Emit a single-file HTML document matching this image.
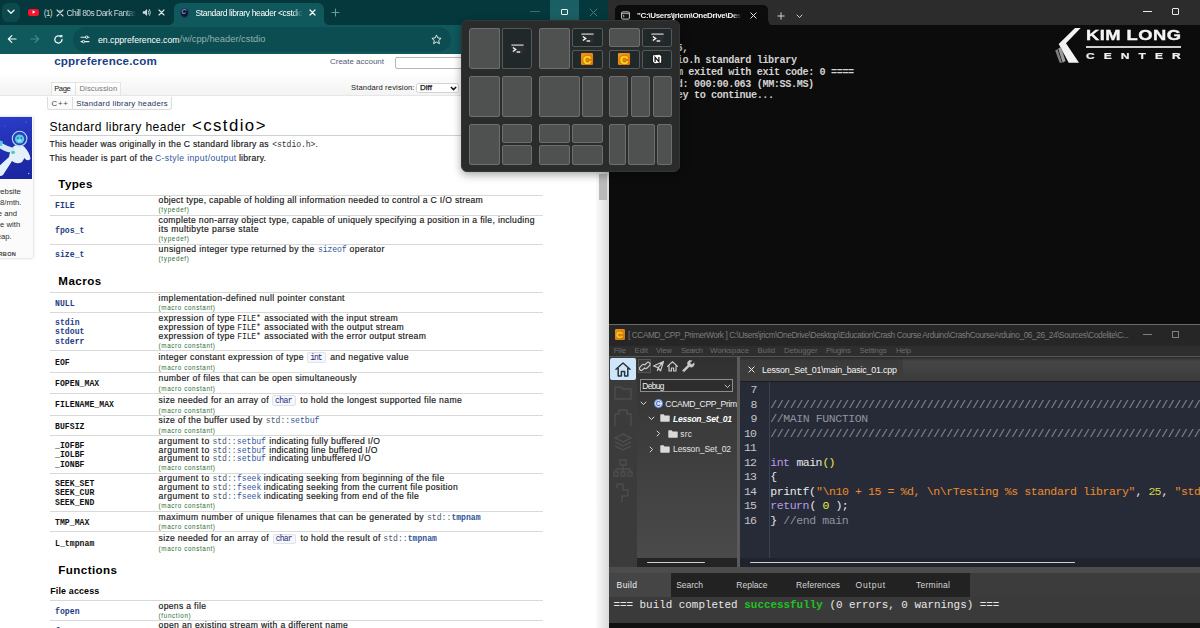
<!DOCTYPE html>
<html>
<head>
<meta charset="utf-8">
<title>Desktop</title>
<style>
*{box-sizing:border-box;margin:0;padding:0}
html,body{width:1200px;height:628px;overflow:hidden;background:#0c0c0c;font-family:"Liberation Sans",sans-serif;}
.abs{position:absolute}
#stage{position:absolute;left:0;top:0;width:1200px;height:628px;overflow:hidden;font-size:9px;line-height:1}
.t{position:absolute;white-space:nowrap;line-height:1}
#browser{left:0;top:0;width:609px;height:628px;background:#fff;overflow:hidden}
#tabbar{left:0;top:0;width:609px;height:25px;background:#04383c}
#toolbar{left:0;top:25px;width:609px;height:28px;background:#0f585c}
#page{left:0;top:53px;width:609px;height:575px;background:#fff;overflow:hidden}
#term{left:608px;top:0;width:592px;height:325px;background:#0c0c0c;overflow:hidden}
#termbar{left:0;top:0;width:592px;height:25px;background:#2c2c2c}
</style>
</head>
<body>
<div id="stage">
<!-- BROWSER -->
<div id="browser" class="abs">
<div id="tabbar" class="abs">
<div class="abs" style="left:2.00px;top:2.50px;width:17.50px;height:19.00px;background:#0d4a4e;border-radius:6px;"></div>
<svg class="abs" style="left:7px;top:9px" width="8" height="6" viewBox="0 0 8 6"><path d="M1 1.2 L4 4.2 L7 1.2" fill="none" stroke="#e8f2f2" stroke-width="1.4" stroke-linecap="round" stroke-linejoin="round"/></svg>
<div class="abs" style="left:28.00px;top:8.60px;width:11.00px;height:7.20px;background:#f5132d;border-radius:2.2px;"></div>
<svg class="abs" style="left:31.6px;top:10.2px" width="4" height="4" viewBox="0 0 4 4"><path d="M0.6 0.3 L3.4 2 L0.6 3.7Z" fill="#fff"/></svg>
<div class="t" style="left:43.80px;top:8.64px;font-size:8.50px;color:#c9d9da;letter-spacing:-0.844px;">(1)</div>
<svg class="abs" style="left:55.5px;top:8.5px" width="8" height="8" viewBox="0 0 8 8"><path d="M1 1 L7 7 M7 1 L1 7" stroke="#c9d9da" stroke-width="1.1" stroke-linecap="round"/><path d="M3 1.2 L4 2.6 L5 1.2" stroke="#c9d9da" stroke-width=".8" fill="none"/></svg>
<div class="t" style="left:66.50px;top:8.64px;font-size:8.50px;color:#c9d9da;letter-spacing:-0.538px;-webkit-mask-image:linear-gradient(90deg,#000 85%,transparent);">Chill 80s Dark Fantas</div>
<svg class="abs" style="left:141.5px;top:8px" width="10" height="9" viewBox="0 0 10 9"><path d="M0.8 3.2 H2.6 L5 1 V8 L2.6 5.8 H0.8Z" fill="#c9d9da"/><path d="M6.3 2.8 Q7.4 4.5 6.3 6.2 M7.6 1.6 Q9.4 4.5 7.6 7.4" stroke="#c9d9da" stroke-width=".9" fill="none" stroke-linecap="round"/></svg>
<svg class="abs" style="left:157.5px;top:9px" width="7" height="7" viewBox="0 0 7 7"><path d="M1 1 L6 6 M6 1 L1 6" stroke="#dfeaea" stroke-width="1.1" stroke-linecap="round"/></svg>
<div class="abs" style="left:173.50px;top:3.00px;width:150.50px;height:23.00px;background:#0f585c;border-radius:6px 6px 0 0;"></div>
<div class="abs" style="left:168.5px;top:20px;width:5px;height:5px;background:radial-gradient(circle at 0 0,transparent 4.6px,#0f585c 5.2px)"></div>
<div class="abs" style="left:324px;top:20px;width:5px;height:5px;background:radial-gradient(circle at 100% 0,transparent 4.6px,#0f585c 5.2px)"></div>
<div class="abs" style="left:179.5px;top:8px;width:9.5px;height:9.5px;border-radius:50%;background:#0b1a33;border:0.8px solid #27406b"></div>
<div class="t" style="left:181.60px;top:9.17px;font-size:6.30px;color:#7f96c4;font-weight:700;font-style:italic;">C</div>
<div class="t" style="left:195.50px;top:8.64px;font-size:8.50px;color:#ffffff;letter-spacing:-0.362px;-webkit-mask-image:linear-gradient(90deg,#000 90%,transparent);">Standard library header &lt;cstdio</div>
<svg class="abs" style="left:309px;top:9px" width="7" height="7" viewBox="0 0 7 7"><path d="M1 1 L6 6 M6 1 L1 6" stroke="#fff" stroke-width="1.2" stroke-linecap="round"/></svg>
<svg class="abs" style="left:331px;top:8px" width="9" height="9" viewBox="0 0 9 9"><path d="M4.5 1 V8 M1 4.5 H8" stroke="#6a9c9e" stroke-width="1.1" stroke-linecap="round"/></svg>
<div class="abs" style="left:529.50px;top:11.40px;width:10.00px;height:1.00px;background:#2f7174;"></div>
<div class="abs" style="left:550.00px;top:0.00px;width:29.00px;height:20.50px;background:#1a5f63;"></div>
<div class="abs" style="left:561px;top:8.5px;width:6.6px;height:6.6px;border:1px solid #f0f6f6;border-radius:1px"></div>
<svg class="abs" style="left:589px;top:8px" width="9" height="9" viewBox="0 0 9 9"><path d="M1 1 L8 8 M8 1 L1 8" stroke="#3f8285" stroke-width="1" stroke-linecap="round"/></svg>
</div>
<div id="toolbar" class="abs">
<svg class="abs" style="left:7px;top:9px" width="10" height="10" viewBox="0 0 10 10"><path d="M9 5 H1.5 M4.8 1.6 L1.4 5 L4.8 8.4" fill="none" stroke="#f2f8f8" stroke-width="1.2" stroke-linecap="round" stroke-linejoin="round"/></svg>
<svg class="abs" style="left:30px;top:9px" width="10" height="10" viewBox="0 0 10 10"><path d="M1 5 H8.5 M5.2 1.6 L8.6 5 L5.2 8.4" fill="none" stroke="#3f8a8d" stroke-width="1.2" stroke-linecap="round" stroke-linejoin="round"/></svg>
<svg class="abs" style="left:53px;top:8.5px" width="11" height="11" viewBox="0 0 11 11"><path d="M9 5.5 A3.6 3.6 0 1 1 7.9 2.9" fill="none" stroke="#f2f8f8" stroke-width="1.3" stroke-linecap="round"/><path d="M6.6 0.9 H9.4 V3.7Z" fill="#f2f8f8"/></svg>
<div class="abs" style="left:72.50px;top:1.50px;width:378.00px;height:25.00px;background:#0c4d51;border-radius:12.5px;"></div>
<svg class="abs" style="left:80px;top:9.5px" width="10" height="9" viewBox="0 0 10 9"><path d="M1 2.2 H5.2 M7.6 2.2 H9 M1 6.6 H2.4 M4.8 6.6 H9" stroke="#e6f0f0" stroke-width="1.1" stroke-linecap="round"/><circle cx="6.6" cy="2.2" r="1.2" fill="none" stroke="#e6f0f0" stroke-width="1"/><circle cx="3.4" cy="6.6" r="1.2" fill="none" stroke="#e6f0f0" stroke-width="1"/></svg>
<div class="t" style="left:98.00px;top:10.54px;font-size:8.69px;color:#ffffff;letter-spacing:0.000px;">en.cppreference.com</div>
<div class="t" style="left:179.80px;top:10.16px;font-size:9.35px;color:#8fb0b2;letter-spacing:-0.000px;">/w/cpp/header/cstdio</div>
<svg class="abs" style="left:431px;top:8.5px" width="11" height="11" viewBox="0 0 11 11"><path d="M5.5 1 L6.9 4 L10.1 4.3 L7.7 6.5 L8.4 9.7 L5.5 8 L2.6 9.7 L3.3 6.5 L0.9 4.3 L4.1 4Z" fill="none" stroke="#dbe8e8" stroke-width="1" stroke-linejoin="round"/></svg>
</div>
<div id="page" class="abs">
<div class="abs" style="left:0;top:0.7px;width:600px;height:41.5px;background:linear-gradient(#fff 45%,#f3f3f3)"></div>
<div class="abs" style="left:0.00px;top:0.00px;width:609.00px;height:0.70px;background:#0f585c;"></div>
<div class="t" style="left:54.20px;top:2.10px;font-size:11.60px;color:#1c3f88;font-weight:700;letter-spacing:0.178px;">cppreference.com</div>
<div class="t" style="left:330.00px;top:4.72px;font-size:8.00px;color:#545c78;letter-spacing:-0.020px;">Create account</div>
<div class="abs" style="left:395px;top:3.5px;width:70px;height:12px;border:1px solid #b5b5b5;border-radius:2px;background:#fff"></div>
<div class="abs" style="left:50.5px;top:28.5px;width:70px;height:14px;border:1px solid #e4e4e4;border-bottom:none;background:linear-gradient(#fff,#f6f6f6)"></div>
<div class="abs" style="left:74.50px;top:29.00px;width:1.00px;height:13.00px;background:#e0e0e0;"></div>
<div class="t" style="left:54.20px;top:31.84px;font-size:7.60px;color:#222;letter-spacing:-0.417px;">Page</div>
<div class="t" style="left:79.50px;top:31.84px;font-size:7.60px;color:#777;letter-spacing:0.106px;">Discussion</div>
<div class="abs" style="left:0.00px;top:42.00px;width:596.00px;height:1.00px;background:#e6e6e6;"></div>
<div class="t" style="left:351.00px;top:30.94px;font-size:7.60px;color:#222;letter-spacing:0.132px;">Standard revision:</div>
<div class="abs" style="left:416px;top:29.7px;width:43.2px;height:10.2px;border:1px solid #d2d2d2;border-radius:2.5px;background:#fff"></div>
<div class="t" style="left:420.00px;top:30.72px;font-size:8.00px;color:#111;-webkit-text-stroke:.25px #111;">Diff</div>
<svg class="abs" style="left:449.6px;top:32.6px" width="7" height="5" viewBox="0 0 7 5"><path d="M.9 .9 L3.5 3.6 L6.1 .9" fill="none" stroke="#111" stroke-width="1.5"/></svg>
<div class="abs" style="left:46.5px;top:44.0px;width:125px;height:12.5px;border:1px solid #dcdcdc;border-top:none;border-radius:0 0 3px 3px;background:#fbfbfb"></div>
<div class="abs" style="left:72.30px;top:44.00px;width:1.00px;height:12.00px;background:#dcdcdc;"></div>
<div class="t" style="left:51.50px;top:46.83px;font-size:7.80px;color:#444;letter-spacing:0.778px;">C++</div>
<div class="t" style="left:76.20px;top:46.83px;font-size:7.80px;color:#2a3560;letter-spacing:0.269px;">Standard library headers</div>
<div class="abs" style="left:-6px;top:63.5px;width:39.3px;height:141.5px;background:#fbfbfb;box-shadow:0 0 3px rgba(0,0,0,.22)"></div>
<div class="abs" style="left:0;top:63.5px;width:32.4px;height:62.8px;background:linear-gradient(170deg,#2a3cc8,#1f2db0 55%,#1b279e);overflow:hidden"><svg width="33" height="63" viewBox="0 0 33 63"><circle cx="28.7" cy="56.5" r=".7" fill="#b9c6ff"/><circle cx="26" cy="5" r=".5" fill="#8fa0ff"/><circle cx="5" cy="9" r=".4" fill="#8fa0ff"/><path d="M14 29 Q19 26.5 24 29.5 Q30 36 30.5 42 Q27 45 24.5 41 L22 45 Q17 48 12 44 L3 58 Q0 60 -2 58 L-2 50 L9 40 Q10 33 14 29Z" fill="#e4f1fa"/><path d="M15 31 Q8 30 0 25 L-1 31 Q7 36 13 36Z" fill="#d3e9f6"/><path d="M-1 23 L3 24.5 L2 29 L-1 29Z" fill="#59c9d8"/><path d="M11 34.5 l3.4 -.8 l.9 2.6 l-3.4 .9Z" fill="#4fc6b4"/><circle cx="19.6" cy="21.6" r="7.3" fill="#2b3dc0" stroke="#a9def0" stroke-width="1.1"/><circle cx="19.6" cy="22" r="4.6" fill="#58cde0"/><circle cx="17.9" cy="21" r=".8" fill="#2638b0"/><circle cx="21.3" cy="21" r=".8" fill="#2638b0"/><ellipse cx="19.6" cy="23.8" rx="2" ry="1.3" fill="#9ce4ee"/></svg></div>
<div class="t" style="left:-5.21px;top:134.89px;font-size:7.70px;color:#2e2e2e;">website</div>
<div class="t" style="left:0.10px;top:145.89px;font-size:7.70px;color:#2e2e2e;">8/mth.</div>
<div class="t" style="left:-2.27px;top:157.09px;font-size:7.70px;color:#2e2e2e;">e and</div>
<div class="t" style="left:0.09px;top:168.39px;font-size:7.70px;color:#2e2e2e;">e with</div>
<div class="t" style="left:-3.29px;top:179.79px;font-size:7.70px;color:#2e2e2e;">eap.</div>
<div class="t" style="left:-10.18px;top:199.06px;font-size:5.60px;color:#3a3a3a;font-weight:700;letter-spacing:.3px;">CARBON</div>
<div class="t" style="left:49.40px;top:68.42px;font-size:12.10px;color:#000;letter-spacing:0.429px;">Standard library header</div>
<div class="t" style="left:192.00px;top:64.69px;font-size:16.80px;color:#000;letter-spacing:1.427px;">&lt;cstdio&gt;</div>
<div class="abs" style="left:50.00px;top:81.90px;width:546.00px;height:1.00px;background:#cdd0d4;"></div>
<div class="t" style="left:49.40px;top:87.18px;font-size:8.60px;color:#1a1a1a;letter-spacing:0.274px;-webkit-text-stroke:.18px #1a1a1a;">This header was originally in the C standard library as</div>
<div class="t" style="left:272.30px;top:87.64px;font-size:8.15px;color:#333;font-family:'Liberation Mono',monospace;letter-spacing:-0.102px;">&lt;stdio.h&gt;</div>
<div class="t" style="left:315.60px;top:87.18px;font-size:8.60px;color:#1a1a1a;">.</div>
<div class="t" style="left:49.40px;top:101.18px;font-size:8.60px;color:#1a1a1a;letter-spacing:0.323px;-webkit-text-stroke:.18px #1a1a1a;">This header is part of the</div>
<div class="t" style="left:155.00px;top:101.18px;font-size:8.60px;color:#2f549c;letter-spacing:0.379px;">C-style input/output</div>
<div class="t" style="left:238.90px;top:101.18px;font-size:8.60px;color:#1a1a1a;letter-spacing:0.276px;-webkit-text-stroke:.18px #1a1a1a;">library.</div>
<div class="t" style="left:58.30px;top:124.80px;font-size:11.60px;color:#000;font-weight:700;letter-spacing:0.359px;">Types</div>
<div class="t" style="left:58.30px;top:222.30px;font-size:11.60px;color:#000;font-weight:700;letter-spacing:0.477px;">Macros</div>
<div class="t" style="left:58.30px;top:510.90px;font-size:11.60px;color:#000;font-weight:700;letter-spacing:0.410px;">Functions</div>
<div class="t" style="left:50.20px;top:534.02px;font-size:8.90px;color:#000;font-weight:700;letter-spacing:0.170px;">File access</div>
<div class="abs" style="left:50.00px;top:141.50px;width:493.00px;height:1.00px;background:#d9d9d9;"></div>
<div class="abs" style="left:50.00px;top:161.50px;width:493.00px;height:1.00px;background:#d9d9d9;"></div>
<div class="abs" style="left:50.00px;top:190.50px;width:493.00px;height:1.00px;background:#d9d9d9;"></div>
<div class="abs" style="left:50.00px;top:238.50px;width:493.00px;height:1.00px;background:#d9d9d9;"></div>
<div class="abs" style="left:50.00px;top:258.50px;width:493.00px;height:1.00px;background:#d9d9d9;"></div>
<div class="abs" style="left:50.00px;top:296.50px;width:493.00px;height:1.00px;background:#d9d9d9;"></div>
<div class="abs" style="left:50.00px;top:318.50px;width:493.00px;height:1.00px;background:#d9d9d9;"></div>
<div class="abs" style="left:50.00px;top:339.50px;width:493.00px;height:1.00px;background:#d9d9d9;"></div>
<div class="abs" style="left:50.00px;top:361.50px;width:493.00px;height:1.00px;background:#d9d9d9;"></div>
<div class="abs" style="left:50.00px;top:381.50px;width:493.00px;height:1.00px;background:#d9d9d9;"></div>
<div class="abs" style="left:50.00px;top:419.50px;width:493.00px;height:1.00px;background:#d9d9d9;"></div>
<div class="abs" style="left:50.00px;top:457.50px;width:493.00px;height:1.00px;background:#d9d9d9;"></div>
<div class="abs" style="left:50.00px;top:478.10px;width:493.00px;height:1.00px;background:#d9d9d9;"></div>
<div class="abs" style="left:50.00px;top:547.00px;width:493.00px;height:1.00px;background:#d9d9d9;"></div>
<div class="abs" style="left:50.00px;top:567.00px;width:493.00px;height:1.00px;background:#d9d9d9;"></div>
<div class="t" style="left:55.00px;top:149.24px;font-size:8.15px;color:#1f3d86;font-family:'Liberation Mono',monospace;font-weight:700;letter-spacing:0.052px;">FILE</div>
<div class="t" style="left:158.60px;top:143.08px;font-size:8.60px;color:#1a1a1a;letter-spacing:0.318px;-webkit-text-stroke:.18px #1a1a1a;">object type, capable of holding all information needed to control a C I/O stream</div>
<div class="t" style="left:158.60px;top:154.17px;font-size:6.30px;color:#2c6e34;letter-spacing:0.680px;">(typedef)</div>
<div class="t" style="left:55.00px;top:174.24px;font-size:8.15px;color:#1f3d86;font-family:'Liberation Mono',monospace;font-weight:700;letter-spacing:0.047px;">fpos_t</div>
<div class="t" style="left:158.60px;top:163.38px;font-size:8.60px;color:#1a1a1a;letter-spacing:0.333px;-webkit-text-stroke:.18px #1a1a1a;">complete non-array object type, capable of uniquely specifying a position in a file, including</div>
<div class="t" style="left:158.60px;top:172.38px;font-size:8.60px;color:#1a1a1a;letter-spacing:0.403px;-webkit-text-stroke:.18px #1a1a1a;">its multibyte parse state</div>
<div class="t" style="left:158.60px;top:183.27px;font-size:6.30px;color:#2c6e34;letter-spacing:0.680px;">(typedef)</div>
<div class="t" style="left:55.00px;top:198.44px;font-size:8.15px;color:#1f3d86;font-family:'Liberation Mono',monospace;font-weight:700;letter-spacing:0.047px;">size_t</div>
<div class="t" style="left:158.60px;top:192.18px;font-size:8.60px;color:#1a1a1a;letter-spacing:0.373px;-webkit-text-stroke:.18px #1a1a1a;">unsigned integer type returned by the</div>
<div class="t" style="left:318.00px;top:193.14px;font-size:8.15px;color:#2f549c;font-family:'Liberation Mono',monospace;letter-spacing:-0.109px;">sizeof</div>
<div class="t" style="left:349.60px;top:192.18px;font-size:8.60px;color:#1a1a1a;letter-spacing:0.395px;-webkit-text-stroke:.18px #1a1a1a;">operator</div>
<div class="t" style="left:158.60px;top:202.97px;font-size:6.30px;color:#2c6e34;letter-spacing:0.680px;">(typedef)</div>
<div class="t" style="left:55.00px;top:247.24px;font-size:8.15px;color:#1f3d86;font-family:'Liberation Mono',monospace;font-weight:700;letter-spacing:0.052px;">NULL</div>
<div class="t" style="left:158.60px;top:240.78px;font-size:8.60px;color:#1a1a1a;letter-spacing:0.401px;-webkit-text-stroke:.18px #1a1a1a;">implementation-defined null pointer constant</div>
<div class="t" style="left:158.60px;top:251.87px;font-size:6.30px;color:#2c6e34;letter-spacing:0.609px;">(macro constant)</div>
<div class="t" style="left:55.00px;top:265.84px;font-size:8.15px;color:#1f3d86;font-family:'Liberation Mono',monospace;font-weight:700;letter-spacing:0.049px;">stdin</div>
<div class="t" style="left:55.00px;top:275.24px;font-size:8.15px;color:#1f3d86;font-family:'Liberation Mono',monospace;font-weight:700;letter-spacing:0.047px;">stdout</div>
<div class="t" style="left:55.00px;top:284.84px;font-size:8.15px;color:#1f3d86;font-family:'Liberation Mono',monospace;font-weight:700;letter-spacing:0.047px;">stderr</div>
<div class="t" style="left:158.60px;top:261.18px;font-size:8.60px;color:#1a1a1a;letter-spacing:0.365px;-webkit-text-stroke:.18px #1a1a1a;">expression of type</div>
<div class="t" style="left:237.30px;top:262.14px;font-size:8.15px;color:#222;font-family:'Liberation Mono',monospace;letter-spacing:-0.188px;">FILE*</div>
<div class="t" style="left:264.20px;top:261.18px;font-size:8.60px;color:#1a1a1a;letter-spacing:0.347px;-webkit-text-stroke:.18px #1a1a1a;">associated with the input stream</div>
<div class="t" style="left:158.60px;top:269.88px;font-size:8.60px;color:#1a1a1a;letter-spacing:0.365px;-webkit-text-stroke:.18px #1a1a1a;">expression of type</div>
<div class="t" style="left:237.30px;top:270.84px;font-size:8.15px;color:#222;font-family:'Liberation Mono',monospace;letter-spacing:-0.188px;">FILE*</div>
<div class="t" style="left:264.20px;top:269.88px;font-size:8.60px;color:#1a1a1a;letter-spacing:0.359px;-webkit-text-stroke:.18px #1a1a1a;">associated with the output stream</div>
<div class="t" style="left:158.60px;top:278.78px;font-size:8.60px;color:#1a1a1a;letter-spacing:0.365px;-webkit-text-stroke:.18px #1a1a1a;">expression of type</div>
<div class="t" style="left:237.30px;top:279.74px;font-size:8.15px;color:#222;font-family:'Liberation Mono',monospace;letter-spacing:-0.188px;">FILE*</div>
<div class="t" style="left:264.20px;top:278.78px;font-size:8.60px;color:#1a1a1a;letter-spacing:0.346px;-webkit-text-stroke:.18px #1a1a1a;">associated with the error output stream</div>
<div class="t" style="left:158.60px;top:289.87px;font-size:6.30px;color:#2c6e34;letter-spacing:0.609px;">(macro constant)</div>
<div class="t" style="left:55.00px;top:306.24px;font-size:8.15px;color:#111;font-family:'Liberation Mono',monospace;font-weight:700;letter-spacing:0.059px;">EOF</div>
<div class="t" style="left:158.60px;top:300.18px;font-size:8.60px;color:#1a1a1a;letter-spacing:0.342px;-webkit-text-stroke:.18px #1a1a1a;">integer constant expression of type</div>
<div class="abs" style="left:307.0px;top:299.4px;width:19.0px;height:10.5px;border:1px solid #dfe2ea;border-radius:2px;background:#f6f7fa"></div>
<div class="t" style="left:310.20px;top:300.94px;font-size:8.15px;color:#1d2a7c;font-family:'Liberation Mono',monospace;letter-spacing:-1.036px;">int</div>
<div class="t" style="left:330.20px;top:300.18px;font-size:8.60px;color:#1a1a1a;letter-spacing:0.365px;-webkit-text-stroke:.18px #1a1a1a;">and negative value</div>
<div class="t" style="left:158.60px;top:311.67px;font-size:6.30px;color:#2c6e34;letter-spacing:0.609px;">(macro constant)</div>
<div class="t" style="left:55.00px;top:326.94px;font-size:8.15px;color:#111;font-family:'Liberation Mono',monospace;font-weight:700;letter-spacing:0.044px;">FOPEN_MAX</div>
<div class="t" style="left:158.60px;top:320.78px;font-size:8.60px;color:#1a1a1a;letter-spacing:0.347px;-webkit-text-stroke:.18px #1a1a1a;">number of files that can be open simultaneously</div>
<div class="t" style="left:158.60px;top:332.67px;font-size:6.30px;color:#2c6e34;letter-spacing:0.609px;">(macro constant)</div>
<div class="t" style="left:55.00px;top:348.44px;font-size:8.15px;color:#111;font-family:'Liberation Mono',monospace;font-weight:700;letter-spacing:0.043px;">FILENAME_MAX</div>
<div class="t" style="left:158.60px;top:342.78px;font-size:8.60px;color:#1a1a1a;letter-spacing:0.296px;-webkit-text-stroke:.18px #1a1a1a;">size needed for an array of</div>
<div class="abs" style="left:271.7px;top:342.0px;width:24.3px;height:10.5px;border:1px solid #dfe2ea;border-radius:2px;background:#f6f7fa"></div>
<div class="t" style="left:274.90px;top:343.54px;font-size:8.15px;color:#1d2a7c;font-family:'Liberation Mono',monospace;letter-spacing:-0.554px;">char</div>
<div class="t" style="left:300.20px;top:342.78px;font-size:8.60px;color:#1a1a1a;letter-spacing:0.352px;-webkit-text-stroke:.18px #1a1a1a;">to hold the longest supported file name</div>
<div class="t" style="left:158.60px;top:354.67px;font-size:6.30px;color:#2c6e34;letter-spacing:0.609px;">(macro constant)</div>
<div class="t" style="left:55.00px;top:369.94px;font-size:8.15px;color:#111;font-family:'Liberation Mono',monospace;font-weight:700;letter-spacing:0.047px;">BUFSIZ</div>
<div class="t" style="left:158.60px;top:363.38px;font-size:8.60px;color:#1a1a1a;letter-spacing:0.315px;-webkit-text-stroke:.18px #1a1a1a;">size of the buffer used by</div>
<div class="t" style="left:265.80px;top:364.34px;font-size:8.15px;color:#4a5570;font-family:'Liberation Mono',monospace;letter-spacing:-0.013px;">std::</div>
<div class="t" style="left:290.20px;top:364.34px;font-size:8.15px;color:#2f549c;font-family:'Liberation Mono',monospace;letter-spacing:-0.013px;">setbuf</div>
<div class="t" style="left:158.60px;top:374.67px;font-size:6.30px;color:#2c6e34;letter-spacing:0.609px;">(macro constant)</div>
<div class="t" style="left:55.00px;top:388.74px;font-size:8.15px;color:#111;font-family:'Liberation Mono',monospace;font-weight:700;letter-spacing:0.047px;">_IOFBF</div>
<div class="t" style="left:55.00px;top:398.24px;font-size:8.15px;color:#111;font-family:'Liberation Mono',monospace;font-weight:700;letter-spacing:0.047px;">_IOLBF</div>
<div class="t" style="left:55.00px;top:407.84px;font-size:8.15px;color:#111;font-family:'Liberation Mono',monospace;font-weight:700;letter-spacing:0.047px;">_IONBF</div>
<div class="t" style="left:158.60px;top:383.88px;font-size:8.60px;color:#1a1a1a;letter-spacing:0.471px;-webkit-text-stroke:.18px #1a1a1a;">argument to</div>
<div class="t" style="left:212.40px;top:384.84px;font-size:8.15px;color:#4a5570;font-family:'Liberation Mono',monospace;letter-spacing:-0.013px;">std::</div>
<div class="t" style="left:236.80px;top:384.84px;font-size:8.15px;color:#2f549c;font-family:'Liberation Mono',monospace;letter-spacing:-0.013px;">setbuf</div>
<div class="t" style="left:269.20px;top:383.88px;font-size:8.60px;color:#1a1a1a;letter-spacing:0.326px;-webkit-text-stroke:.18px #1a1a1a;">indicating fully buffered I/O</div>
<div class="t" style="left:158.60px;top:392.58px;font-size:8.60px;color:#1a1a1a;letter-spacing:0.471px;-webkit-text-stroke:.18px #1a1a1a;">argument to</div>
<div class="t" style="left:212.40px;top:393.54px;font-size:8.15px;color:#4a5570;font-family:'Liberation Mono',monospace;letter-spacing:-0.013px;">std::</div>
<div class="t" style="left:236.80px;top:393.54px;font-size:8.15px;color:#2f549c;font-family:'Liberation Mono',monospace;letter-spacing:-0.013px;">setbuf</div>
<div class="t" style="left:269.20px;top:392.58px;font-size:8.60px;color:#1a1a1a;letter-spacing:0.313px;-webkit-text-stroke:.18px #1a1a1a;">indicating line buffered I/O</div>
<div class="t" style="left:158.60px;top:401.38px;font-size:8.60px;color:#1a1a1a;letter-spacing:0.471px;-webkit-text-stroke:.18px #1a1a1a;">argument to</div>
<div class="t" style="left:212.40px;top:402.34px;font-size:8.15px;color:#4a5570;font-family:'Liberation Mono',monospace;letter-spacing:-0.013px;">std::</div>
<div class="t" style="left:236.80px;top:402.34px;font-size:8.15px;color:#2f549c;font-family:'Liberation Mono',monospace;letter-spacing:-0.013px;">setbuf</div>
<div class="t" style="left:269.20px;top:401.38px;font-size:8.60px;color:#1a1a1a;letter-spacing:0.331px;-webkit-text-stroke:.18px #1a1a1a;">indicating unbuffered I/O</div>
<div class="t" style="left:158.60px;top:412.17px;font-size:6.30px;color:#2c6e34;letter-spacing:0.609px;">(macro constant)</div>
<div class="t" style="left:55.00px;top:426.74px;font-size:8.15px;color:#111;font-family:'Liberation Mono',monospace;font-weight:700;letter-spacing:0.045px;">SEEK_SET</div>
<div class="t" style="left:55.00px;top:436.24px;font-size:8.15px;color:#111;font-family:'Liberation Mono',monospace;font-weight:700;letter-spacing:0.045px;">SEEK_CUR</div>
<div class="t" style="left:55.00px;top:445.94px;font-size:8.15px;color:#111;font-family:'Liberation Mono',monospace;font-weight:700;letter-spacing:0.045px;">SEEK_END</div>
<div class="t" style="left:158.60px;top:421.48px;font-size:8.60px;color:#1a1a1a;letter-spacing:0.471px;-webkit-text-stroke:.18px #1a1a1a;">argument to</div>
<div class="t" style="left:212.60px;top:422.44px;font-size:8.15px;color:#4a5570;font-family:'Liberation Mono',monospace;letter-spacing:-0.013px;">std::</div>
<div class="t" style="left:237.00px;top:422.44px;font-size:8.15px;color:#2f549c;font-family:'Liberation Mono',monospace;letter-spacing:-0.013px;">fseek</div>
<div class="t" style="left:263.70px;top:421.48px;font-size:8.60px;color:#1a1a1a;letter-spacing:0.356px;-webkit-text-stroke:.18px #1a1a1a;">indicating seeking from beginning of the file</div>
<div class="t" style="left:158.60px;top:430.38px;font-size:8.60px;color:#1a1a1a;letter-spacing:0.471px;-webkit-text-stroke:.18px #1a1a1a;">argument to</div>
<div class="t" style="left:212.60px;top:431.34px;font-size:8.15px;color:#4a5570;font-family:'Liberation Mono',monospace;letter-spacing:-0.013px;">std::</div>
<div class="t" style="left:237.00px;top:431.34px;font-size:8.15px;color:#2f549c;font-family:'Liberation Mono',monospace;letter-spacing:-0.013px;">fseek</div>
<div class="t" style="left:263.70px;top:430.38px;font-size:8.60px;color:#1a1a1a;letter-spacing:0.359px;-webkit-text-stroke:.18px #1a1a1a;">indicating seeking from the current file position</div>
<div class="t" style="left:158.60px;top:439.18px;font-size:8.60px;color:#1a1a1a;letter-spacing:0.471px;-webkit-text-stroke:.18px #1a1a1a;">argument to</div>
<div class="t" style="left:212.60px;top:440.14px;font-size:8.15px;color:#4a5570;font-family:'Liberation Mono',monospace;letter-spacing:-0.013px;">std::</div>
<div class="t" style="left:237.00px;top:440.14px;font-size:8.15px;color:#2f549c;font-family:'Liberation Mono',monospace;letter-spacing:-0.013px;">fseek</div>
<div class="t" style="left:263.70px;top:439.18px;font-size:8.60px;color:#1a1a1a;letter-spacing:0.350px;-webkit-text-stroke:.18px #1a1a1a;">indicating seeking from end of the file</div>
<div class="t" style="left:158.60px;top:449.97px;font-size:6.30px;color:#2c6e34;letter-spacing:0.609px;">(macro constant)</div>
<div class="t" style="left:55.00px;top:465.94px;font-size:8.15px;color:#111;font-family:'Liberation Mono',monospace;font-weight:700;letter-spacing:0.046px;">TMP_MAX</div>
<div class="t" style="left:158.60px;top:460.18px;font-size:8.60px;color:#1a1a1a;letter-spacing:0.377px;-webkit-text-stroke:.18px #1a1a1a;">maximum number of unique filenames that can be generated by</div>
<div class="t" style="left:427.00px;top:461.14px;font-size:8.15px;color:#4a5570;font-family:'Liberation Mono',monospace;letter-spacing:-0.013px;">std::</div>
<div class="t" style="left:451.40px;top:461.14px;font-size:8.15px;color:#2f549c;font-family:'Liberation Mono',monospace;font-weight:700;letter-spacing:-0.013px;">tmpnam</div>
<div class="t" style="left:158.60px;top:470.87px;font-size:6.30px;color:#2c6e34;letter-spacing:0.609px;">(macro constant)</div>
<div class="t" style="left:55.00px;top:486.94px;font-size:8.15px;color:#111;font-family:'Liberation Mono',monospace;font-weight:700;letter-spacing:0.045px;">L_tmpnam</div>
<div class="t" style="left:158.60px;top:481.38px;font-size:8.60px;color:#1a1a1a;letter-spacing:0.296px;-webkit-text-stroke:.18px #1a1a1a;">size needed for an array of</div>
<div class="abs" style="left:272.5px;top:480.6px;width:23.3px;height:10.5px;border:1px solid #dfe2ea;border-radius:2px;background:#f6f7fa"></div>
<div class="t" style="left:275.70px;top:482.14px;font-size:8.15px;color:#1d2a7c;font-family:'Liberation Mono',monospace;letter-spacing:-0.888px;">char</div>
<div class="t" style="left:300.50px;top:481.38px;font-size:8.60px;color:#1a1a1a;letter-spacing:0.338px;-webkit-text-stroke:.18px #1a1a1a;">to hold the result of</div>
<div class="t" style="left:383.30px;top:482.34px;font-size:8.15px;color:#4a5570;font-family:'Liberation Mono',monospace;letter-spacing:-0.013px;">std::</div>
<div class="t" style="left:407.70px;top:482.34px;font-size:8.15px;color:#2f549c;font-family:'Liberation Mono',monospace;font-weight:700;letter-spacing:-0.013px;">tmpnam</div>
<div class="t" style="left:158.60px;top:492.67px;font-size:6.30px;color:#2c6e34;letter-spacing:0.609px;">(macro constant)</div>
<div class="t" style="left:55.00px;top:554.94px;font-size:8.15px;color:#1f3d86;font-family:'Liberation Mono',monospace;font-weight:700;letter-spacing:0.049px;">fopen</div>
<div class="t" style="left:158.60px;top:548.78px;font-size:8.60px;color:#1a1a1a;letter-spacing:0.310px;-webkit-text-stroke:.18px #1a1a1a;">opens a file</div>
<div class="t" style="left:158.60px;top:559.67px;font-size:6.30px;color:#2c6e34;letter-spacing:0.649px;">(function)</div>
<div class="t" style="left:55.00px;top:575.24px;font-size:8.15px;color:#1f3d86;font-family:'Liberation Mono',monospace;font-weight:700;letter-spacing:0.046px;">freopen</div>
<div class="t" style="left:158.60px;top:568.18px;font-size:8.60px;color:#1a1a1a;letter-spacing:0.364px;-webkit-text-stroke:.18px #1a1a1a;">open an existing stream with a different name</div>
</div>
</div>
<!-- TERMINAL -->
<div id="term" class="abs">
<div id="termbar" class="abs"></div>
<div class="abs" style="left:7.00px;top:5.00px;width:153.00px;height:20.50px;background:#0c0c0c;border-radius:5px 5px 0 0;"></div>
<div class="abs" style="left:2.5px;top:20.5px;width:4.5px;height:4.5px;background:radial-gradient(circle at 0 0,transparent 4.2px,#0c0c0c 4.8px)"></div>
<div class="abs" style="left:160.0px;top:20.5px;width:4.5px;height:4.5px;background:radial-gradient(circle at 100% 0,transparent 4.2px,#0c0c0c 4.8px)"></div>
<svg class="abs" style="left:12.5px;top:11px" width="9" height="9" viewBox="0 0 9 9"><rect x=".6" y=".9" width="7.8" height="7.2" rx="1" fill="#111" stroke="#e2e2e2" stroke-width=".9"/><path d="M.6 2.6 H8.4" stroke="#e2e2e2" stroke-width=".7"/><path d="M2 4.2 L3.3 5.2 L2 6.2" stroke="#e2e2e2" stroke-width=".7" fill="none"/></svg>
<div class="t" style="left:29.00px;top:11.92px;font-size:8.00px;color:#f4f4f4;font-weight:700;letter-spacing:-0.305px;-webkit-mask-image:linear-gradient(90deg,#000 92%,transparent);">&quot;C:\Users\jricm\OneDrive\Des</div>
<svg class="abs" style="left:142.3px;top:12px" width="7" height="7" viewBox="0 0 7 7"><path d="M.8 .8 L6.2 6.2 M6.2 .8 L.8 6.2" stroke="#e6e6e6" stroke-width="1" stroke-linecap="round"/></svg>
<svg class="abs" style="left:169.2px;top:11.5px" width="8" height="8" viewBox="0 0 8 8"><path d="M4 .8 V7.2 M.8 4 H7.2" stroke="#cfcfcf" stroke-width="1" stroke-linecap="round"/></svg>
<svg class="abs" style="left:188.0px;top:13.5px" width="7" height="5" viewBox="0 0 7 5"><path d="M1 1 L3.5 3.6 L6 1" stroke="#cfcfcf" stroke-width="1" fill="none" stroke-linecap="round"/></svg>
<div class="abs" style="left:535.00px;top:10.80px;width:9.00px;height:1.00px;background:#e8e8e8;"></div>
<div class="abs" style="left:563.5px;top:7.5px;width:7.5px;height:7.5px;border:1px solid #e8e8e8;border-radius:1px"></div>
<div class="t" style="left:6.10px;top:44.29px;font-size:10.20px;color:#d2d2d2;font-family:'Liberation Mono',monospace;font-weight:700;letter-spacing:-0.429px;">10 + 15 = 25,</div>
<div class="t" style="left:6.10px;top:56.09px;font-size:10.20px;color:#d2d2d2;font-family:'Liberation Mono',monospace;font-weight:700;letter-spacing:-0.409px;">Testing stdio.h standard library</div>
<div class="t" style="left:6.10px;top:67.89px;font-size:10.20px;color:#d2d2d2;font-family:'Liberation Mono',monospace;font-weight:700;letter-spacing:-0.406px;">==== Program exited with exit code: 0 ====</div>
<div class="t" style="left:6.10px;top:79.69px;font-size:10.20px;color:#d2d2d2;font-family:'Liberation Mono',monospace;font-weight:700;letter-spacing:-0.408px;">Time elapsed: 000:00.063 (MM:SS.MS)</div>
<div class="t" style="left:6.10px;top:91.49px;font-size:10.20px;color:#d2d2d2;font-family:'Liberation Mono',monospace;font-weight:700;letter-spacing:-0.411px;">Press any key to continue...</div>
<svg class="abs" style="left:442px;top:20px" width="140" height="50" viewBox="0 0 140 50"><path d="M25 8 L30.7 8 L16 23.3 L29 42.7 L18.7 42.7 L8.7 24Z" fill="#f3f3f3"/><path d="M8.2 28.5 L11 27 L15.6 41 L12.6 42.7Z" fill="#9a9a9a"/><path d="M5.2 30.5 L7.6 29 L12 42.7 L9.6 42.7Z" fill="#7d7d7d"/></svg>
<div class="t" style="left:478.00px;top:29.15px;font-size:13.90px;color:#f5f5f5;font-weight:700;letter-spacing:0.354px;transform:scaleX(1.320);transform-origin:0 50%;-webkit-text-stroke:.35px #f5f5f5;">KIM LONG</div>
<div class="abs" style="left:478.00px;top:46.00px;width:95.00px;height:1.80px;background:#cfcfcf;"></div>
<div class="t" style="left:478.30px;top:51.75px;font-size:8.30px;color:#f0f0f0;font-weight:700;letter-spacing:6.237px;transform:scaleX(1.450);transform-origin:0 50%;-webkit-text-stroke:.2px #f0f0f0;">CENTER</div>
</div>
<!-- IDE -->
<div class="abs" style="left:608.00px;top:324.00px;width:592.00px;height:304.00px;background:#2b2b2b;"></div>
<div class="abs" style="left:608.00px;top:324.00px;width:592.00px;height:1.00px;background:#6a6a6a;"></div>
<div class="abs" style="left:609.00px;top:325.00px;width:591.00px;height:20.50px;background:#262626;"></div>
<div class="abs" style="left:614.5px;top:329.3px;width:10.2px;height:10.6px;background:linear-gradient(135deg,#e8931a,#cf7410);border-radius:1.2px"></div>
<div class="t" style="left:616.00px;top:330.39px;font-size:9.80px;color:#ffd21c;font-weight:700;-webkit-text-stroke:.4px #ffd21c;text-shadow:0 0 1px #7a2c05;">C</div>
<div class="t" style="left:628.00px;top:330.78px;font-size:8.30px;color:#7c7c7c;letter-spacing:-0.429px;">[ CCAMD_CPP_PrimerWork ] C:\Users\jricm\OneDrive\Desktop\Education\Crash Course Arduino\CrashCourseArduino_06_26_24\Sources\Codelite\C...</div>
<div class="abs" style="left:1143.00px;top:334.00px;width:8.50px;height:1.00px;background:#808080;"></div>
<div class="abs" style="left:1172px;top:330.5px;width:7px;height:7px;border:1px solid #808080"></div>
<div class="abs" style="left:609.00px;top:345.50px;width:591.00px;height:11.00px;background:#2e2e2e;"></div>
<div class="t" style="left:613.70px;top:346.71px;font-size:7.80px;color:#6c6c6c;letter-spacing:-0.089px;">File</div>
<div class="t" style="left:634.40px;top:346.71px;font-size:7.80px;color:#6c6c6c;letter-spacing:0.053px;">Edit</div>
<div class="t" style="left:656.00px;top:346.71px;font-size:7.80px;color:#6c6c6c;letter-spacing:-0.255px;">View</div>
<div class="t" style="left:681.00px;top:346.71px;font-size:7.80px;color:#6c6c6c;letter-spacing:-0.543px;">Search</div>
<div class="t" style="left:710.00px;top:346.71px;font-size:7.80px;color:#6c6c6c;letter-spacing:0.016px;">Workspace</div>
<div class="t" style="left:757.60px;top:346.71px;font-size:7.80px;color:#6c6c6c;letter-spacing:0.014px;">Build</div>
<div class="t" style="left:784.00px;top:346.71px;font-size:7.80px;color:#6c6c6c;letter-spacing:-0.108px;">Debugger</div>
<div class="t" style="left:826.00px;top:346.71px;font-size:7.80px;color:#6c6c6c;letter-spacing:-0.097px;">Plugins</div>
<div class="t" style="left:859.50px;top:346.71px;font-size:7.80px;color:#6c6c6c;letter-spacing:-0.098px;">Settings</div>
<div class="t" style="left:896.00px;top:346.71px;font-size:7.80px;color:#6c6c6c;letter-spacing:-0.347px;">Help</div>
<div class="abs" style="left:609.00px;top:356.40px;width:591.00px;height:1.00px;background:#555;"></div>
<div class="abs" style="left:609.00px;top:357.00px;width:28.00px;height:216.00px;background:#3b3b3b;"></div>
<div class="abs" style="left:610.00px;top:357.50px;width:25.50px;height:22.50px;background:#cfe6fa;border-radius:2px;"></div>
<svg class="abs" style="left:614px;top:360.5px" width="18" height="17" viewBox="0 0 18 17"><path d="M2 8.2 L9 2 L16 8.2 M4.2 7 V15 H7.4 V10.4 H10.6 V15 H13.8 V7" fill="none" stroke="#26323c" stroke-width="1.5" stroke-linejoin="round" stroke-linecap="round"/></svg>
<svg class="abs" style="left:613px;top:384px" width="20" height="120" viewBox="0 0 20 120" fill="none" stroke="#4d4d4d" stroke-width="1.4"><path d="M2 3 H8 L10 5 H18 V15 H2Z"/><path d="M2 42 V30 H6 V26 H14 V30 H18 V42"/><path d="M10 50 L18 54 L10 58 L2 54Z M2 58 L10 62 L18 58 M2 62 L10 66 L18 62"/><path d="M7 76 H13 V81 H7Z M10 81 V85 M3 85 H17 M3 85 V88 M17 85 V88 M10 85 V88 M1 88 H5 V92 H1Z M8 88 H12 V92 H8Z M15 88 H19 V92 H15Z"/><path d="M4 100 H10 V106 H15 V112 M4 100 V104 M15 112 H9 V118"/></svg>
<div class="abs" style="left:637px;top:357px;width:101px;height:201px;background:linear-gradient(#303030,#3a3a3a 30%,#4a4a4a)"></div>
<div class="abs" style="left:637.5px;top:358.5px;width:13px;height:14px;border:1px solid #555;background:#3a3a3a"></div>
<svg class="abs" style="left:639px;top:360px" width="60" height="13" viewBox="0 0 60 13" fill="none" stroke="#c9c9c9" stroke-width="1.2" stroke-linecap="round" stroke-linejoin="round"><path d="M4.2 8.2 L2.6 9.8 A1.9 1.9 0 0 1 0 7.1 L2.4 4.7 A1.9 1.9 0 0 1 5.1 4.7 M5.4 4.3 L7 2.7 A1.9 1.9 0 0 1 9.7 5.4 L7.3 7.8 A1.9 1.9 0 0 1 4.6 7.8" transform="translate(.8 .2)"/><path d="M14.5 6 L24.5 1.5 L21.5 11 L19.2 7.6Z M19.2 7.6 L24.5 1.5 M19.2 7.6 L18.4 10.6"/><path d="M28.5 6.4 L33.5 1.8 L38.5 6.4 M30 5.6 V11 H32.4 V8 H34.6 V11 H37 V5.6"/><path d="M44 11.2 L49.4 5.8 A3 3 0 0 1 53.4 1.6 L51.4 3.6 L52.4 5 L53.8 5.4 L55.4 3.6 A3 3 0 0 1 51 7.4 L45.6 12.6Z" fill="#c9c9c9" stroke-width=".5" transform="translate(-.5 -.8)"/></svg>
<div class="abs" style="left:639.5px;top:378.8px;width:93.4px;height:13.6px;border:1px solid #8d8d8d;background:#2d2d2d"></div>
<div class="t" style="left:642.30px;top:381.88px;font-size:8.30px;color:#f2f2f2;letter-spacing:-0.565px;">Debug</div>
<svg class="abs" style="left:723.5px;top:383.5px" width="7" height="5" viewBox="0 0 7 5"><path d="M.8 .8 L3.5 3.6 L6.2 .8" stroke="#d0d0d0" stroke-width=".9" fill="none"/></svg>
<svg class="abs" style="left:639.5px;top:401.4px" width="7" height="5" viewBox="0 0 7 5"><path d="M.8 .8 L3.5 3.6 L6.2 .8" stroke="#d8d8d8" stroke-width="1" fill="none"/></svg>
<div class="abs" style="left:653.6px;top:399.2px;width:9px;height:9px;border-radius:50%;background:#dfe9fb;border:1px solid #6b8fd6"></div>
<div class="t" style="left:655.70px;top:400.86px;font-size:6.60px;color:#2d5fc4;font-weight:700;">C</div>
<div class="t" style="left:665.30px;top:399.84px;font-size:8.60px;color:#ececec;letter-spacing:-0.343px;">CCAMD_CPP_Prim</div>
<svg class="abs" style="left:647.5px;top:416.3px" width="7" height="5" viewBox="0 0 7 5"><path d="M.8 .8 L3.5 3.6 L6.2 .8" stroke="#d8d8d8" stroke-width="1" fill="none"/></svg>
<svg class="abs" style="left:659.5px;top:414.3px" width="10" height="8" viewBox="0 0 10 8"><path d="M.3 .9 Q.3 .3 .9 .3 H3.6 L4.6 1.4 H9.2 Q9.7 1.4 9.7 2 V7.1 Q9.7 7.7 9.1 7.7 H.9 Q.3 7.7 .3 7.1Z" fill="#d9d9d9"/></svg>
<div class="t" style="left:673.00px;top:414.89px;font-size:8.50px;color:#ffffff;font-weight:700;font-style:italic;letter-spacing:-0.241px;">Lesson_Set_01</div>
<svg class="abs" style="left:656.4px;top:430.3px" width="5" height="7" viewBox="0 0 5 7"><path d="M.8 .8 L3.6 3.5 L.8 6.2" stroke="#d8d8d8" stroke-width="1" fill="none"/></svg>
<svg class="abs" style="left:668.0px;top:429.5px" width="10" height="8" viewBox="0 0 10 8"><path d="M.3 .9 Q.3 .3 .9 .3 H3.6 L4.6 1.4 H9.2 Q9.7 1.4 9.7 2 V7.1 Q9.7 7.7 9.1 7.7 H.9 Q.3 7.7 .3 7.1Z" fill="#d9d9d9"/></svg>
<div class="t" style="left:680.30px;top:430.18px;font-size:8.30px;color:#e4e4e4;letter-spacing:0.318px;">src</div>
<svg class="abs" style="left:648.7px;top:445.5px" width="5" height="7" viewBox="0 0 5 7"><path d="M.8 .8 L3.6 3.5 L.8 6.2" stroke="#d8d8d8" stroke-width="1" fill="none"/></svg>
<svg class="abs" style="left:659.5px;top:444.8px" width="10" height="8" viewBox="0 0 10 8"><path d="M.3 .9 Q.3 .3 .9 .3 H3.6 L4.6 1.4 H9.2 Q9.7 1.4 9.7 2 V7.1 Q9.7 7.7 9.1 7.7 H.9 Q.3 7.7 .3 7.1Z" fill="#d9d9d9"/></svg>
<div class="t" style="left:673.00px;top:445.29px;font-size:8.50px;color:#e4e4e4;letter-spacing:-0.090px;">Lesson_Set_02</div>
<div class="abs" style="left:637.00px;top:557.70px;width:101.00px;height:9.50px;background:#242424;"></div>
<div class="abs" style="left:647.00px;top:562.30px;width:58.00px;height:1.20px;background:#cfcfcf;border-radius:1px;"></div>
<div class="abs" style="left:737.30px;top:357.00px;width:3.00px;height:211.00px;background:#5a5a5a;"></div>
<div class="abs" style="left:740px;top:357px;width:460px;height:24.5px;background:linear-gradient(#2c2c2c,#464646 18%,#3b3b3b)"></div>
<div class="abs" style="left:740px;top:357px;width:163px;height:24.5px;background:linear-gradient(#2b2b2b,#3b3b3b 15%,#3d3d3d)"></div>
<svg class="abs" style="left:747.6px;top:366px" width="7" height="7" viewBox="0 0 7 7"><path d="M.6 .6 L6.4 6.4 M6.4 .6 L.6 6.4" stroke="#f0f0f0" stroke-width="1"/></svg>
<div class="t" style="left:762.00px;top:365.61px;font-size:8.90px;color:#f4f4f4;letter-spacing:-0.191px;">Lesson_Set_01\main_basic_01.cpp</div>
<div class="abs" style="left:740.00px;top:381.00px;width:460.00px;height:1.00px;background:#1c1c1c;"></div>
<div class="abs" style="left:740.00px;top:382.00px;width:460.00px;height:176.00px;background:#272b37;"></div>
<div class="abs" style="left:768.80px;top:382.00px;width:1.00px;height:176.00px;background:#3c414e;"></div>
<div class="t" style="left:750.48px;top:384.16px;font-size:11.50px;color:#c3c6cc;font-family:'Liberation Mono',monospace;letter-spacing:-0.381px;">7</div>
<div class="t" style="left:750.48px;top:398.68px;font-size:11.50px;color:#c3c6cc;font-family:'Liberation Mono',monospace;letter-spacing:-0.381px;">8</div>
<div class="t" style="left:770.30px;top:398.68px;font-size:11.50px;color:#8e949e;font-family:'Liberation Mono',monospace;letter-spacing:-0.387px;">//////////////////////////////////////////////////////////////////////</div>
<div class="t" style="left:750.48px;top:413.20px;font-size:11.50px;color:#c3c6cc;font-family:'Liberation Mono',monospace;letter-spacing:-0.381px;">9</div>
<div class="t" style="left:770.30px;top:413.20px;font-size:11.50px;color:#8e949e;font-family:'Liberation Mono',monospace;letter-spacing:-0.408px;">//MAIN FUNCTION</div>
<div class="t" style="left:743.96px;top:427.72px;font-size:11.50px;color:#c3c6cc;font-family:'Liberation Mono',monospace;letter-spacing:-0.762px;">10</div>
<div class="t" style="left:770.30px;top:427.72px;font-size:11.50px;color:#8e949e;font-family:'Liberation Mono',monospace;letter-spacing:-0.387px;">//////////////////////////////////////////////////////////////////////</div>
<div class="t" style="left:743.96px;top:442.24px;font-size:11.50px;color:#c3c6cc;font-family:'Liberation Mono',monospace;letter-spacing:-0.762px;">11</div>
<div class="t" style="left:743.96px;top:456.76px;font-size:11.50px;color:#c3c6cc;font-family:'Liberation Mono',monospace;letter-spacing:-0.762px;">12</div>
<div class="t" style="left:770.30px;top:456.76px;font-size:11.50px;color:#b99be8;font-family:'Liberation Mono',monospace;letter-spacing:-0.572px;">int</div>
<div class="t" style="left:796.38px;top:456.76px;font-size:11.50px;color:#e9e9ee;font-family:'Liberation Mono',monospace;letter-spacing:-0.508px;">main</div>
<div class="t" style="left:822.46px;top:456.76px;font-size:11.50px;color:#ecec4c;font-family:'Liberation Mono',monospace;letter-spacing:-0.762px;">()</div>
<div class="t" style="left:743.96px;top:471.28px;font-size:11.50px;color:#c3c6cc;font-family:'Liberation Mono',monospace;letter-spacing:-0.762px;">13</div>
<div class="t" style="left:770.30px;top:471.28px;font-size:11.50px;color:#e9e9ee;font-family:'Liberation Mono',monospace;letter-spacing:-0.381px;">{</div>
<div class="t" style="left:743.96px;top:485.80px;font-size:11.50px;color:#c3c6cc;font-family:'Liberation Mono',monospace;letter-spacing:-0.762px;">14</div>
<div class="t" style="left:770.30px;top:485.80px;font-size:11.50px;color:#e9e9ee;font-family:'Liberation Mono',monospace;letter-spacing:-0.445px;">printf(</div>
<div class="t" style="left:815.94px;top:485.80px;font-size:11.50px;color:#ec8b2c;font-family:'Liberation Mono',monospace;letter-spacing:-0.389px;">&quot;\n10 + 15 = %d, \n\rTesting %s standard library&quot;</div>
<div class="t" style="left:1135.42px;top:485.80px;font-size:11.50px;color:#e9e9ee;font-family:'Liberation Mono',monospace;letter-spacing:-0.381px;">,</div>
<div class="t" style="left:1148.46px;top:485.80px;font-size:11.50px;color:#d8d848;font-family:'Liberation Mono',monospace;letter-spacing:-0.762px;">25</div>
<div class="t" style="left:1161.50px;top:485.80px;font-size:11.50px;color:#e9e9ee;font-family:'Liberation Mono',monospace;letter-spacing:-0.381px;">,</div>
<div class="t" style="left:1174.54px;top:485.80px;font-size:11.50px;color:#ec8b2c;font-family:'Liberation Mono',monospace;letter-spacing:-0.429px;">&quot;stdio.h&quot;</div>
<div class="t" style="left:1239.74px;top:485.80px;font-size:11.50px;color:#e9e9ee;font-family:'Liberation Mono',monospace;letter-spacing:-0.762px;">);</div>
<div class="t" style="left:743.96px;top:500.32px;font-size:11.50px;color:#c3c6cc;font-family:'Liberation Mono',monospace;letter-spacing:-0.762px;">15</div>
<div class="t" style="left:770.30px;top:500.32px;font-size:11.50px;color:#b99be8;font-family:'Liberation Mono',monospace;letter-spacing:-0.457px;">return</div>
<div class="t" style="left:809.42px;top:500.32px;font-size:11.50px;color:#e9e9ee;font-family:'Liberation Mono',monospace;letter-spacing:-0.381px;">(</div>
<div class="t" style="left:822.46px;top:500.32px;font-size:11.50px;color:#ecec4c;font-family:'Liberation Mono',monospace;letter-spacing:-0.381px;">0</div>
<div class="t" style="left:835.50px;top:500.32px;font-size:11.50px;color:#e9e9ee;font-family:'Liberation Mono',monospace;letter-spacing:-0.762px;">);</div>
<div class="t" style="left:743.96px;top:514.84px;font-size:11.50px;color:#c3c6cc;font-family:'Liberation Mono',monospace;letter-spacing:-0.762px;">16</div>
<div class="t" style="left:770.30px;top:514.84px;font-size:11.50px;color:#e9e9ee;font-family:'Liberation Mono',monospace;letter-spacing:-0.381px;">}</div>
<div class="t" style="left:783.34px;top:514.84px;font-size:11.50px;color:#8e949e;font-family:'Liberation Mono',monospace;letter-spacing:-0.423px;">//end main</div>
<div class="abs" style="left:740.00px;top:557.70px;width:460.00px;height:9.50px;background:#20232b;"></div>
<div class="abs" style="left:750.00px;top:562.30px;width:324.50px;height:1.20px;background:#cfcfcf;border-radius:1px;"></div>
<div class="abs" style="left:608.00px;top:567.00px;width:592.00px;height:5.60px;background:#4c4c4c;"></div>
<div class="abs" style="left:609.00px;top:572.50px;width:361.00px;height:24.00px;background:#222222;"></div>
<div class="abs" style="left:970.00px;top:572.50px;width:230.00px;height:24.00px;background:#3c3c3c;"></div>
<div class="abs" style="left:609.00px;top:572.50px;width:61.50px;height:24.00px;background:#454545;"></div>
<div class="t" style="left:616.60px;top:581.29px;font-size:8.50px;color:#f0f0f0;letter-spacing:0.375px;">Build</div>
<div class="t" style="left:676.20px;top:581.29px;font-size:8.50px;color:#d6d6d6;letter-spacing:-0.026px;">Search</div>
<div class="t" style="left:736.30px;top:581.29px;font-size:8.50px;color:#d6d6d6;letter-spacing:0.002px;">Replace</div>
<div class="t" style="left:796.00px;top:581.29px;font-size:8.50px;color:#d6d6d6;letter-spacing:0.059px;">References</div>
<div class="t" style="left:855.60px;top:581.29px;font-size:8.50px;color:#d6d6d6;letter-spacing:0.777px;">Output</div>
<div class="t" style="left:916.00px;top:581.29px;font-size:8.50px;color:#d6d6d6;letter-spacing:0.269px;">Terminal</div>
<div class="abs" style="left:609.00px;top:596.50px;width:591.00px;height:26.50px;background:#3a3a3a;"></div>
<div class="t" style="left:613.40px;top:599.59px;font-size:10.90px;color:#e8e8e8;font-family:'Liberation Mono',monospace;letter-spacing:0.004px;">=== build completed</div>
<div class="t" style="left:744.30px;top:599.59px;font-size:10.90px;color:#1fc320;font-family:'Liberation Mono',monospace;font-weight:700;letter-spacing:0.004px;">successfully</div>
<div class="t" style="left:829.38px;top:599.59px;font-size:10.90px;color:#e8e8e8;font-family:'Liberation Mono',monospace;letter-spacing:0.004px;">(0 errors, 0 warnings) ===</div>
<div class="abs" style="left:608.00px;top:622.70px;width:592.00px;height:6.00px;background:#101010;"></div>
<!-- PAGE SCROLLBAR / WINDOW EDGE -->
<div class="abs" style="left:596px;top:53.7px;width:12.8px;height:575px;background:linear-gradient(90deg,#fbfbfb,#ececec 45%,#d9d9d9)"></div>
<div class="abs" style="left:599.2px;top:173.5px;width:7.4px;height:26px;background:#b9b9b9"></div>
<!-- SNAP OVERLAY -->
<div class="abs" style="left:460.7px;top:19.8px;width:218.9px;height:152.2px;background:#2a2b2b;border-radius:6px;box-shadow:0 3px 8px rgba(0,0,0,.35);border:1px solid #343535"></div>
<div class="abs" style="left:468.7px;top:28.0px;width:30.9px;height:40.8px;background:#4f5151;border:1px solid #6d6f6f;border-radius:3px 1px 1px 3px"></div>
<div class="abs" style="left:501.8px;top:28.0px;width:30.6px;height:40.8px;background:#202829;border:1px solid #525a5b;border-radius:1px 3px 3px 1px"></div>
<svg class="abs" style="left:510.5px;top:43.6px" width="13" height="10" viewBox="0 0 13 10"><rect x=".3" y=".2" width="12.4" height="9.6" rx=".8" fill="#2b2d2e"/><rect x=".3" y=".2" width="12.4" height="1.9" rx=".5" fill="#9b9d9e"/><path d="M1.9 3.5 L4.7 5.5 L1.9 7.5" stroke="#fff" stroke-width="1.35" fill="none"/><path d="M5.6 8 H9.2" stroke="#fff" stroke-width="1.3"/></svg>
<div class="abs" style="left:539.4px;top:28.0px;width:30.3px;height:40.8px;background:#4f5151;border:1px solid #6d6f6f;border-radius:2px"></div>
<div class="abs" style="left:572.0px;top:28.0px;width:30.5px;height:19.0px;background:#202829;border:1px solid #525a5b;border-radius:2px"></div>
<div class="abs" style="left:572.0px;top:49.7px;width:30.5px;height:19.1px;background:#202829;border:1px solid #525a5b;border-radius:2px"></div>
<svg class="abs" style="left:580.7px;top:32.6px" width="13" height="10" viewBox="0 0 13 10"><rect x=".3" y=".2" width="12.4" height="9.6" rx=".8" fill="#2b2d2e"/><rect x=".3" y=".2" width="12.4" height="1.9" rx=".5" fill="#9b9d9e"/><path d="M1.9 3.5 L4.7 5.5 L1.9 7.5" stroke="#fff" stroke-width="1.35" fill="none"/><path d="M5.6 8 H9.2" stroke="#fff" stroke-width="1.3"/></svg>
<div class="abs" style="left:581.0px;top:53.0px;width:12.4px;height:12.4px;background:linear-gradient(135deg,#f09a1c,#d9780f);border-radius:1.2px;box-shadow:0 0 1.5px #7a2c05"></div>
<div class="t" style="left:583.05px;top:53.80px;font-size:11.60px;color:#ffd61c;font-weight:700;-webkit-text-stroke:.6px #ffd61c;text-shadow:0 0 1.2px #8a2a06,0 0 1.2px #8a2a06;">C</div>
<div class="abs" style="left:609.0px;top:28.0px;width:30.8px;height:19.0px;background:#4f5151;border:1px solid #6d6f6f;border-radius:2px"></div>
<div class="abs" style="left:642.0px;top:28.0px;width:30.0px;height:19.0px;background:#202829;border:1px solid #525a5b;border-radius:2px"></div>
<div class="abs" style="left:609.0px;top:49.7px;width:30.8px;height:19.1px;background:#202829;border:1px solid #525a5b;border-radius:2px"></div>
<div class="abs" style="left:642.0px;top:49.7px;width:30.0px;height:19.1px;background:#202829;border:1px solid #525a5b;border-radius:2px"></div>
<svg class="abs" style="left:650.5px;top:32.6px" width="13" height="10" viewBox="0 0 13 10"><rect x=".3" y=".2" width="12.4" height="9.6" rx=".8" fill="#2b2d2e"/><rect x=".3" y=".2" width="12.4" height="1.9" rx=".5" fill="#9b9d9e"/><path d="M1.9 3.5 L4.7 5.5 L1.9 7.5" stroke="#fff" stroke-width="1.35" fill="none"/><path d="M5.6 8 H9.2" stroke="#fff" stroke-width="1.3"/></svg>
<div class="abs" style="left:618.0px;top:53.0px;width:12.4px;height:12.4px;background:linear-gradient(135deg,#f09a1c,#d9780f);border-radius:1.2px;box-shadow:0 0 1.5px #7a2c05"></div>
<div class="t" style="left:620.05px;top:53.80px;font-size:11.60px;color:#ffd61c;font-weight:700;-webkit-text-stroke:.6px #ffd61c;text-shadow:0 0 1.2px #8a2a06,0 0 1.2px #8a2a06;">C</div>
<svg class="abs" style="left:651.3px;top:53.3px" width="12" height="12" viewBox="0 0 12 12"><path d="M1.4 2 L8.6 1 L10.8 2.8 V10 L3.6 11 L1.4 9Z" fill="#fff" stroke="#151515" stroke-width="1.1" stroke-linejoin="round"/><path d="M4.1 8.9 V4.4 L7.9 8.6 V4" fill="none" stroke="#111" stroke-width="1.25"/></svg>
<div class="abs" style="left:468.7px;top:75.8px;width:30.9px;height:41.5px;background:#4f5151;border:1px solid #6d6f6f;border-radius:2px"></div>
<div class="abs" style="left:501.8px;top:75.8px;width:30.6px;height:41.5px;background:#4f5151;border:1px solid #6d6f6f;border-radius:2px"></div>
<div class="abs" style="left:539.4px;top:75.8px;width:40.2px;height:41.5px;background:#4f5151;border:1px solid #6d6f6f;border-radius:2px"></div>
<div class="abs" style="left:582.0px;top:75.8px;width:20.5px;height:41.5px;background:#4f5151;border:1px solid #6d6f6f;border-radius:2px"></div>
<div class="abs" style="left:609.0px;top:75.8px;width:19.0px;height:41.5px;background:#4f5151;border:1px solid #6d6f6f;border-radius:2px"></div>
<div class="abs" style="left:630.6px;top:75.8px;width:19.7px;height:41.5px;background:#4f5151;border:1px solid #6d6f6f;border-radius:2px"></div>
<div class="abs" style="left:652.9px;top:75.8px;width:19.1px;height:41.5px;background:#4f5151;border:1px solid #6d6f6f;border-radius:2px"></div>
<div class="abs" style="left:468.7px;top:124.3px;width:30.9px;height:40.7px;background:#4f5151;border:1px solid #6d6f6f;border-radius:2px"></div>
<div class="abs" style="left:501.8px;top:124.3px;width:30.6px;height:18.5px;background:#4f5151;border:1px solid #6d6f6f;border-radius:2px"></div>
<div class="abs" style="left:501.8px;top:145.3px;width:30.6px;height:19.7px;background:#4f5151;border:1px solid #6d6f6f;border-radius:2px"></div>
<div class="abs" style="left:539.4px;top:124.3px;width:30.3px;height:18.5px;background:#4f5151;border:1px solid #6d6f6f;border-radius:2px"></div>
<div class="abs" style="left:572.0px;top:124.3px;width:30.5px;height:18.5px;background:#4f5151;border:1px solid #6d6f6f;border-radius:2px"></div>
<div class="abs" style="left:539.4px;top:145.3px;width:30.3px;height:19.7px;background:#4f5151;border:1px solid #6d6f6f;border-radius:2px"></div>
<div class="abs" style="left:572.0px;top:145.3px;width:30.5px;height:19.7px;background:#4f5151;border:1px solid #6d6f6f;border-radius:2px"></div>
<div class="abs" style="left:609.0px;top:124.3px;width:16.5px;height:40.7px;background:#4f5151;border:1px solid #6d6f6f;border-radius:2px"></div>
<div class="abs" style="left:628.0px;top:124.3px;width:27.0px;height:40.7px;background:#4f5151;border:1px solid #6d6f6f;border-radius:2px"></div>
<div class="abs" style="left:657.3px;top:124.3px;width:14.7px;height:40.7px;background:#4f5151;border:1px solid #6d6f6f;border-radius:2px"></div>
</div>
</body>
</html>
